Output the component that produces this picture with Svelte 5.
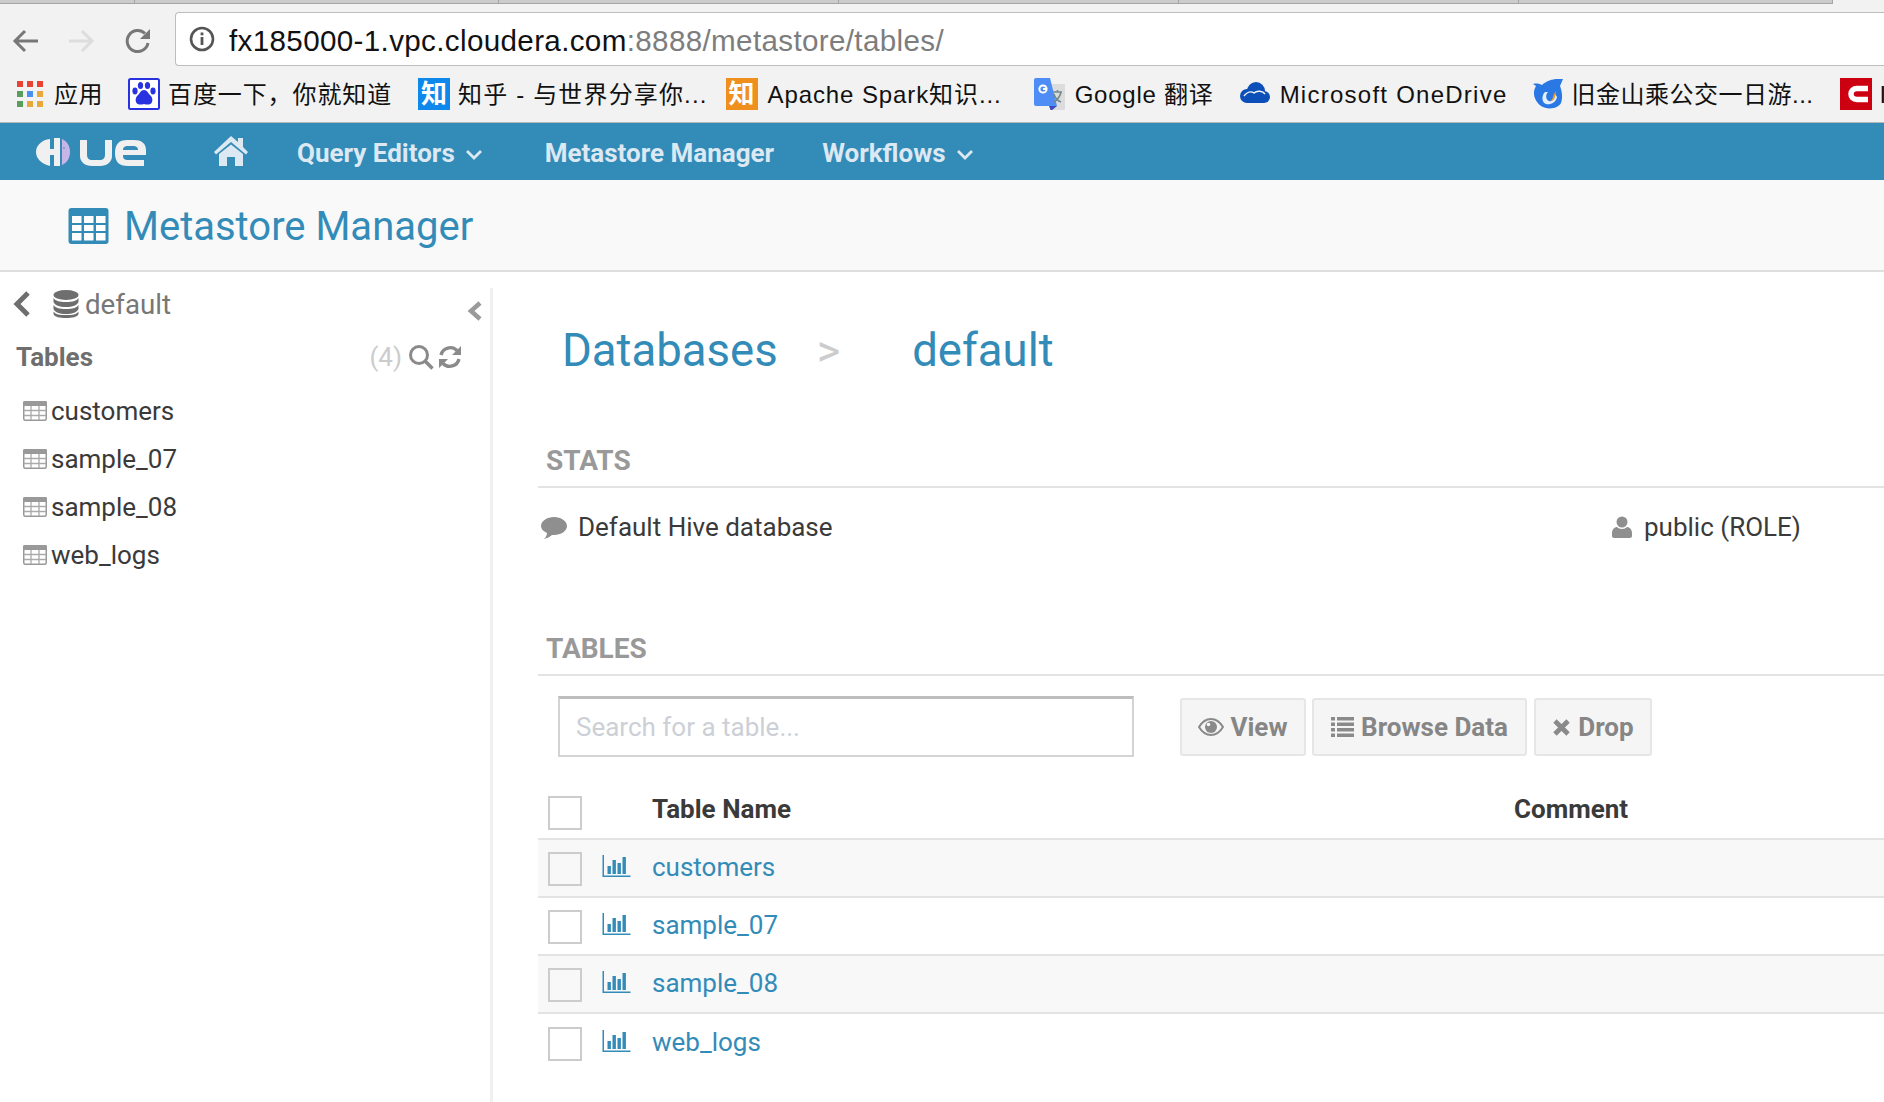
<script>
  const sideTables = ['customers', 'sample_07', 'sample_08', 'web_logs'];
  const tabs = [135, 364, 340, 340, 340, 314];
</script>

<div class="page">
  <div class="tabstrip">
    {#each tabs as w}
      <span class="tab" style="width: {w}px"></span>
    {/each}
  </div>
  <div class="toolbar">
    <svg class="tool back" viewBox="0 0 30 30"><path d="M27 15H5M14 5 4 15l10 10" fill="none" stroke="#777" stroke-width="3"/></svg>
    <svg class="tool fwd" viewBox="0 0 30 30"><path d="M3 15h22M16 5l10 10-10 10" fill="none" stroke="#ddd" stroke-width="3"/></svg>
    <svg class="tool reload" viewBox="0 0 30 30"><path d="M25 17a10.500 10.500 0 1 1-3-9.500" fill="none" stroke="#777" stroke-width="3"/><path d="M27 3v10H17z" fill="#777"/></svg>
    <div class="urlbar">
      <svg class="info" viewBox="0 0 28 28"><circle cx="14" cy="14" r="11" fill="none" stroke="#555" stroke-width="2.600"/><rect x="12.600" y="12" width="2.800" height="8" fill="#555"/><rect x="12.600" y="7.500" width="2.800" height="2.800" fill="#555"/></svg>
      <span class="urltext"><span class="host">fx185000-1.vpc.cloudera.com</span><span class="path">:8888/metastore/tables/</span></span>
    </div>
  </div>

  <div class="bookmarks">
    <div class="bm first">
      <svg class="apps" viewBox="0 0 26 26">
        <rect width="6" height="6" fill="#ea4335"/><rect x="10" width="6" height="6" fill="#ea4335"/><rect x="20" width="6" height="6" fill="#ea4335"/>
        <rect y="10" width="6" height="6" fill="#5a9e5e"/><rect x="10" y="10" width="6" height="6" fill="#4a90f0"/><rect x="20" y="10" width="6" height="6" fill="#e9a83a"/>
        <rect y="20" width="6" height="6" fill="#5a9e5e"/><rect x="10" y="20" width="6" height="6" fill="#e9a83a"/><rect x="20" y="20" width="6" height="6" fill="#e9a83a"/>
      </svg>
      <span>应用</span>
    </div>
    <div class="bm baidu">
      <svg class="fav" viewBox="0 0 32 32"><rect x="1" y="1" width="30" height="30" rx="1.500" fill="#fff" stroke="#2932e1" stroke-width="2"/><g fill="#2932e1"><ellipse cx="7" cy="13" rx="2.600" ry="3.400"/><ellipse cx="12.500" cy="7.500" rx="2.600" ry="3.600"/><ellipse cx="19.500" cy="7.500" rx="2.600" ry="3.600"/><ellipse cx="25" cy="13" rx="2.600" ry="3.400"/><path d="M16 12c-3 0-4 3-6 5s-3 4-2 7 5 3 8 2c3 1 7 1 8-2s0-5-2-7-3-5-6-5z"/></g></svg>
      <span>百度一下，你就知道</span>
    </div>
    <div class="bm zhihu">
      <div class="fav zhi blue">知</div>
      <span>知乎 - 与世界分享你...</span>
    </div>
    <div class="bm spark">
      <div class="fav zhi orange">知</div>
      <span>Apache Spark知识...</span>
    </div>
    <div class="bm gt">
      <svg class="fav" viewBox="0 0 32 32"><path d="M12 6h18a1 1 0 0 1 1 1v24a1 1 0 0 1-1 1H16z" fill="#dcdcdc"/><path d="M2 0h14l7 28H2a2 2 0 0 1-2-2V2a2 2 0 0 1 2-2z" fill="#4d8df5"/><path d="m15 28 2 5 6-5z" fill="#3b4cc0"/><circle cx="9" cy="11" r="3.600" fill="none" stroke="#fff" stroke-width="2"/><path d="M9 11h4" stroke="#fff" stroke-width="2"/><path d="M19 14h9M23.500 12v2M27 14c-1 5-4 8-7 10M20 16c1 4 4 7 7 8" fill="none" stroke="#6f8a90" stroke-width="1.600"/></svg>
      <span>Google 翻译</span>
    </div>
    <div class="bm od">
      <svg class="fav" viewBox="0 0 32 32"><g fill="#0c4fb8"><circle cx="8" cy="18" r="7"/><circle cx="17" cy="13" r="9"/><circle cx="25" cy="19" r="6"/><rect x="8" y="18" width="17" height="7"/></g><path d="M5 18c3-4 7-5 10-3 3-3 9-2 11 1" fill="none" stroke="#f2f2f2" stroke-width="1.400"/></svg>
      <span>Microsoft OneDrive</span>
    </div>
    <div class="bm sf">
      <svg class="fav" viewBox="0 0 32 32"><path d="M31 1l-3 7c2 5 3 12 1 17-3 6-14 7-20 3C2 23 0 14 4 8l-3-2c4-1 7 0 9 1 4-4 11-6 15-6z" fill="#2a78e4"/><path d="M13 14c-4 4-3 11 1 12s10-1 11-7l-2-3c0 5-3 8-6 7s-4-6-1-9z" fill="#e4effb"/><path d="M24 13l-1 6c-1 3-3 4-5 4 3-1 3-5 4-7z" fill="#f59a23"/></svg>
      <span>旧金山乘公交一日游...</span>
    </div>
    <div class="bm cbm">
      <svg class="fav" viewBox="0 0 32 32"><rect width="32" height="32" fill="#cc0011"/><path d="M28 10.500H17c-4 0-6 2.500-6 5.500s2 5.500 6 5.500h11" fill="none" stroke="#fff" stroke-width="5.500"/></svg>
      <span>I</span>
    </div>
  </div>

  <nav class="nav">
    <svg class="logo" viewBox="0 0 110 28">
      <path d="M14 1C5 2 0 8 0 14s5 12 14 14V17h4v11h6V0h-6v11h-4z" fill="#f0f0f0"/>
      <path d="M26 1c5 2 8 7 8 13s-3 11-8 13z" fill="#c8b5e8"/>
      <circle cx="28" cy="10" r="1" fill="#6f9fc8"/>
      <path d="M44 2h7v15c0 3 2 5 5 5h8c3 0 5-2 5-5V2h7v16c0 6-5 10-12 10h-8c-7 0-12-4-12-10z" fill="#f0f0f0"/>
      <path d="M79 15c0-9 4-13 12-13h7c7 0 12 3 12 10v5H87v1c0 3 2 4 5 4h16v6H92c-9 0-13-4-13-13zm8-3h15c0-3-2-4-5-4h-5c-3 0-5 1-5 4z" fill="#f0f0f0"/>
    </svg>
    <svg class="home" viewBox="0 0 34 30"><path d="M17 0l7 6V2h5v9l5 5-2 2.500L17 6 2 18.500 0 16z" fill="#dce8f2"/><path d="M17 8.500 29 18v12h-8v-9h-8v9H5V18z" fill="#dce8f2"/></svg>
    <a class="navitem ed">Query Editors <svg class="caret" viewBox="0 0 18 11"><path d="M2 2l7 7 7-7" fill="none" stroke="#dce8f2" stroke-width="2.800"/></svg></a>
    <a class="navitem ms">Metastore Manager</a>
    <a class="navitem wf">Workflows <svg class="caret" viewBox="0 0 18 11"><path d="M2 2l7 7 7-7" fill="none" stroke="#dce8f2" stroke-width="2.800"/></svg></a>
  </nav>

  <header class="title">
    <svg class="th" viewBox="0 0 40 36"><rect width="40" height="36" rx="3" fill="#338bb8"/><g fill="#fff"><rect x="3.500" y="8" width="9.500" height="7"/><rect x="15.500" y="8" width="9.500" height="7"/><rect x="27.500" y="8" width="9.500" height="7"/><rect x="3.500" y="17" width="9.500" height="6"/><rect x="15.500" y="17" width="9.500" height="6"/><rect x="27.500" y="17" width="9.500" height="6"/><rect x="3.500" y="25" width="9.500" height="7.500"/><rect x="15.500" y="25" width="9.500" height="7.500"/><rect x="27.500" y="25" width="9.500" height="7.500"/></g></svg>
    <h1>Metastore Manager</h1>
  </header>

  <div class="main">
    <aside class="side">
      <div class="dbrow">
        <svg class="chev" viewBox="0 0 18 28"><path d="M15 3 4 14l11 11" fill="none" stroke="#6e6e6e" stroke-width="5"/></svg>
        <svg class="db" viewBox="0 0 26 28"><g fill="#6e6e6e"><ellipse cx="13" cy="5" rx="12.500" ry="5"/><path d="M.5 8c2 3 6 4 12.500 4s10.500-1 12.500-4v4c-1 3-6 5-12.500 5S1.500 15 .5 12z"/><path d="M.5 15c2 3 6 4 12.500 4s10.500-1 12.500-4v4c-1 3-6 5-12.500 5S1.500 22 .5 19z"/><path d="M.5 21.500c2 3 6 3.500 12.500 3.500s10.500-.5 12.500-3.500V24c-1 3-6 4-12.500 4S1.500 27 .5 24z"/></g></svg>
        <span class="dbname">default</span>
        <svg class="collapse" viewBox="0 0 16 22"><path d="M13 3 4 11l9 8" fill="none" stroke="#9a9a9a" stroke-width="4.500"/></svg>
      </div>
      <div class="tbhead">
        <strong>Tables</strong>
        <span class="count">(4)</span>
        <svg class="mini search-ico" viewBox="0 0 26 26"><circle cx="11" cy="11" r="8.500" fill="none" stroke="#8a8a8a" stroke-width="3"/><path d="m17 17 7.500 7.500" stroke="#8a8a8a" stroke-width="3.600"/></svg>
        <svg class="mini" viewBox="0 0 24 24"><path d="M3 10a9.500 9.500 0 0 1 16-4.500M21 14a9.500 9.500 0 0 1-16 4.500" fill="none" stroke="#8a8a8a" stroke-width="3.400"/><path d="M23 1v9h-9zM1 23v-9h9z" fill="#8a8a8a"/></svg>
      </div>
      <ul class="tlist">
        {#each sideTables as t}
          <li>
            <svg class="tbl" viewBox="0 0 24 20"><rect x=".75" y=".75" width="22.500" height="18.500" rx="1.500" fill="#fff" stroke="#999" stroke-width="1.500"/><rect x="0" y="0" width="24" height="5" rx="1.500" fill="#999"/><path d="M8 5v14M16 5v14M1 9.500h22M1 14.500h22" stroke="#aaa" stroke-width="1.300"/></svg>
            <span>{t}</span>
          </li>
        {/each}
      </ul>
    </aside>

    <section class="content">
      <div class="crumbs">
        <a>Databases</a><span class="sep">&gt;</span><a class="cur">default</a>
      </div>

      <h2 class="sec stats">STATS</h2>
      <div class="statrow">
        <div class="desc">
          <svg class="cmt" viewBox="0 0 26 22"><path d="M13 0c7 0 13 4 13 9s-6 9-13 9h-2c-2 2-5 3-8 4 1-1 3-3 3-6-4-2-6-4-6-7 0-5 6-9 13-9z" fill="#8f8f8f"/></svg>
          <span>Default Hive database</span>
        </div>
        <div class="owner">
          <svg class="usr" viewBox="0 0 20 22"><circle cx="10" cy="6" r="5.500" fill="#8f8f8f"/><path d="M0 17c0-4 3-6 5-6 1 1 3 2 5 2s4-1 5-2c2 0 5 2 5 6v3c0 1-1 2-2 2H2c-1 0-2-1-2-2z" fill="#8f8f8f"/></svg>
          <span>public (ROLE)</span>
        </div>
      </div>

      <h2 class="sec tables">TABLES</h2>
      <div class="actions">
        <input class="search" placeholder="Search for a table..." />
        <div class="btn b1"><svg class="ico eye" viewBox="0 0 26 18"><path d="M1 9c3-5 7-8 12-8s9 3 12 8c-3 5-7 8-12 8S4 14 1 9z" fill="none" stroke="#8a8a8a" stroke-width="2"/><circle cx="13" cy="9" r="6" fill="#8a8a8a"/><circle cx="10.500" cy="6.500" r="1.800" fill="#f5f5f5"/></svg>View</div>
        <div class="btn b2"><svg class="ico lst" viewBox="0 0 23 20"><g fill="#8a8a8a"><rect width="4" height="3.500"/><rect x="6" width="17" height="3.500"/><rect y="5.500" width="4" height="3.500"/><rect x="6" y="5.500" width="17" height="3.500"/><rect y="11" width="4" height="3.500"/><rect x="6" y="11" width="17" height="3.500"/><rect y="16.500" width="4" height="3.500"/><rect x="6" y="16.500" width="17" height="3.500"/></g></svg>Browse Data</div>
        <div class="btn b3"><svg class="ico x" viewBox="0 0 16 16"><path d="M2.500 2.500l11 11M13.500 2.500l-11 11" stroke="#8a8a8a" stroke-width="4"/></svg>Drop</div>
      </div>

      <div class="thead">
        <span class="cb"></span>
        <span class="tname">Table Name</span>
        <span class="comment">Comment</span>
      </div>
      {#each sideTables as t, i}
        <div class="row" class:odd={i % 2 === 0}>
          <span class="cb"></span>
          <svg class="bar" viewBox="0 0 28 22"><path d="M.75 0v21.250H28" fill="none" stroke="#338bb8" stroke-width="1.500"/><g fill="#338bb8"><rect x="5" y="11" width="3.400" height="8"/><rect x="10" y="5" width="3.400" height="14"/><rect x="15" y="8" width="3.400" height="11"/><rect x="20" y="2" width="3.400" height="17"/></g></svg>
          <a class="link">{t}</a>
        </div>
      {/each}
    </section>
  </div>
</div>

<style>
  :global(body) {
    margin: 0;
    background: #fff;
    overflow: hidden;
  }
  .page {
    width: 1884px;
    height: 1102px;
    overflow: hidden;
    font-family: Roboto, sans-serif;
    color: #333;
  }
  .tabstrip {
    height: 4px;
    background: #f2f2f2;
    display: flex;
    align-items: flex-start;
  }
  .tab {
    height: 4px;
    box-sizing: border-box;
    background: #cbcbcb;
    border-bottom: 1px solid #a5a5a5;
    border-right: 1px solid #a5a5a5;
    flex: none;
  }
  .toolbar {
    height: 62px;
    background: #f2f2f2;
    display: flex;
    align-items: flex-end;
    box-sizing: border-box;
  }
  .tool { width: 30px; height: 30px; flex: none; margin-bottom: 10px; }
  .back { margin-left: 11px; }
  .fwd { margin-left: 25px; }
  .reload { margin-left: 27px; }
  .urlbar {
    margin-left: 22px;
    height: 54px;
    flex: 1;
    background: #fff;
    border: 1px solid #bdbdbd;
    border-right: 0;
    border-radius: 4px 0 0 4px;
    box-sizing: border-box;
    display: flex;
    align-items: center;
    font-family: "Liberation Sans", sans-serif;
    font-size: 29.600px;
    white-space: nowrap;
  }
  .info { width: 28px; height: 28px; margin-left: 12px; margin-right: 13px; flex: none; }
  .urltext { padding-top: 3px; }
  .host { color: #111; letter-spacing: .35px; }
  .path { color: #7d7d7d; letter-spacing: .35px; }

  .bookmarks {
    height: 57px;
    background: #f2f2f2;
    border-bottom: 1px solid #b8b8b8;
    box-sizing: border-box;
    display: flex;
    align-items: center;
    padding-left: 17px;
    white-space: nowrap;
    font-family: "Liberation Sans", "Noto Sans CJK SC", sans-serif;
    font-size: 24px;
    letter-spacing: .5px;
    color: #111;
    overflow: hidden;
  }
  .bm { display: flex; align-items: center; gap: 8px; margin-left: 26px; flex: none; line-height: 32px; }
  .bm span { padding-top: 2px; }
  .bm.first { margin-left: 0; gap: 11px; }
  .bm.baidu { margin-left: 25px; letter-spacing: .9px; }
  .bm.baidu span { margin-left: 0; }
  .bm.zhihu { margin-left: 26px; letter-spacing: 1.150px; }
  .bm.spark { margin-left: 18px; letter-spacing: .9px; gap: 10px; }
  .bm.gt { margin-left: 32px; letter-spacing: .77px; gap: 9px; }
  .bm.od { margin-left: 25px; letter-spacing: 1.250px; gap: 9px; }
  .bm.sf { margin-left: 24px; }
  .apps { width: 26px; height: 26px; }
  .fav { width: 32px; height: 32px; flex: none; }
  .zhi {
    display: flex; align-items: center; justify-content: center;
    color: #fff; font-size: 26px; font-weight: 700; line-height: 32px; letter-spacing: 0;
  }
  .blue { background: #0f88eb; }
  .orange { background: #ee8f1e; }

  .nav {
    height: 57px;
    background: #338bb8;
    display: flex;
    align-items: center;
    color: #dce8f2;
    font-weight: 700;
    font-size: 26px;
    white-space: nowrap;
  }
  .logo { width: 110px; height: 28px; margin-left: 36px; flex: none; }
  .home { width: 34px; height: 30px; margin-left: 68px; flex: none; margin-top: -2px; }
  .navitem { display: flex; align-items: center; gap: 10px; padding-top: 3px; }
  .ed { margin-left: 49px; }
  .ms { margin-left: 62px; }
  .wf { margin-left: 48px; }
  .caret { width: 18px; height: 11px; margin-top: 3px; }

  .title {
    height: 92px;
    background: #f9f9f9;
    border-bottom: 2px solid #dfdfdf;
    box-sizing: border-box;
    display: flex;
    align-items: center;
    padding-left: 68px;
  }
  .th { width: 41px; height: 36px; margin-top: 2px; }
  h1 {
    margin: 3px 0 0 15px;
    font-weight: 400;
    font-size: 40px;
    color: #338bb8;
    line-height: 1;
  }

  .main { display: flex; height: 830px; }
  .side {
    width: 493px;
    flex: none;
    box-sizing: border-box;
    margin-top: 16px;
    border-right: 3px solid #f0f0f0;
  }
  .dbrow {
    display: flex;
    align-items: center;
    height: 28px;
    padding-left: 13px;
    color: #777;
    font-size: 27.700px;
    position: relative;
    margin-top: 2px;
  }
  .chev { width: 18px; height: 28px; }
  .db { width: 26px; height: 28px; margin-left: 22px; }
  .dbname { margin-left: 6px; }
  .collapse { position: absolute; right: 7px; top: 10px; width: 16px; height: 22px; }
  .tbhead {
    display: flex;
    align-items: center;
    margin-top: 26px;
    height: 26px;
    padding-left: 16px;
    padding-right: 28px;
  }
  .tbhead strong { font-size: 26px; color: #6e6e6e; flex: 1; font-weight: 700; }
  .count { color: #ccc; font-size: 26px; margin-right: 6px; }
  .mini { width: 24px; height: 24px; margin-left: 2px; }
  .search-ico { width: 26px; height: 26px; margin-left: 0; margin-right: 2px; }
  .tlist { list-style: none; margin: 17px 0 0; padding: 0; }
  .tlist li {
    height: 48px;
    display: flex;
    align-items: center;
    padding-left: 23px;
    font-size: 26px;
    color: #3a3a3a;
  }
  .tbl { width: 24px; height: 20px; margin-right: 4px; flex: none; }

  .content { flex: 1; min-width: 0; box-sizing: border-box; padding-left: 45px; }
  .crumbs {
    padding-left: 24px;
    margin-top: 53px;
    height: 50px;
    display: flex;
    align-items: center;
    font-size: 45.500px;
    color: #338bb8;
  }
  .sep { color: #ccc; font-size: 45px; margin-left: 39px; margin-right: 72px; }
  .sec {
    margin: 0;
    font-size: 28px;
    font-weight: 700;
    color: #999;
    padding-left: 8px;
    border-bottom: 2px solid #e3e3e3;
    line-height: 30px;
    box-sizing: border-box;
  }
  .stats { margin-top: 71px; height: 42px; }
  .statrow {
    display: flex;
    align-items: center;
    height: 50px;
    margin-top: 14px;
    font-size: 26px;
    color: #3a3a3a;
    position: relative;
  }
  .desc { display: flex; align-items: center; padding-left: 3px; width: 1071px; flex: none; }
  .cmt { width: 26px; height: 22px; margin-right: 11px; margin-top: 2px; }
  .owner { display: flex; align-items: center; }
  .usr { width: 20px; height: 22px; margin-right: 12px; }
  .tables { margin-top: 82px; height: 42px; }
  .actions { display: flex; align-items: center; margin-top: 20px; height: 62px; padding-left: 20px; }
  .search {
    width: 576px;
    height: 61px;
    box-sizing: border-box;
    border: 2px solid #d4d4d4;
    border-top: 3px solid #bdbdbd;
    background: #fff;
    font-family: Roboto, sans-serif;
    font-size: 26px;
    padding: 0 16px;
    outline: none;
    flex: none;
    align-self: flex-start;
  }
  .search::placeholder { color: #ccd0d6; opacity: 1; }
  .btn {
    height: 58px;
    box-sizing: border-box;
    background: #f5f5f5;
    border: 2px solid #e6e6e6;
    border-radius: 3px;
    display: flex;
    align-items: center;
    justify-content: center;
    gap: 6px;
    font-weight: 700;
    font-size: 26px;
    color: #868686;
    white-space: nowrap;
    flex: none;
    align-self: flex-start;
    margin-top: 2px;
  }
  .b1 { width: 126px; margin-left: 46px; }
  .b2 { width: 215px; margin-left: 6px; gap: 7px; }
  .b3 { width: 118px; margin-left: 7px; gap: 7px; }
  .ico.eye { width: 26px; height: 18px; }
  .ico.lst { width: 23px; height: 20px; }
  .ico.x { width: 19px; height: 19px; }

  .thead {
    display: flex;
    align-items: center;
    height: 82px;
    border-bottom: 2px solid #e3e3e3;
    box-sizing: border-box;
    font-weight: 700;
    font-size: 26px;
    color: #3a3a3a;
    padding-left: 10px;
    padding-top: 24px;
  }
  .cb {
    width: 34px;
    height: 34px;
    box-sizing: border-box;
    border: 2px solid #ccc;
    display: block;
    flex: none;
  }
  .thead .cb { margin-top: 6px; }
  .tname { margin-left: 70px; width: 862px; flex: none; margin-bottom: 2px; }
  .comment { margin-bottom: 2px; }
  .row {
    display: flex;
    align-items: center;
    height: 58px;
    border-bottom: 2px solid #e3e3e3;
    box-sizing: border-box;
    padding-left: 10px;
  }
  .row:last-child { border-bottom: 0; }
  .row.odd { background: #f8f8f8; }
  .row .cb { margin-top: 2px; }
  .bar { width: 29px; height: 22px; margin-left: 20px; flex: none; margin-top: -5px; }
  .link { margin-left: 21px; color: #338bb8; font-size: 26px; margin-top: -2px; }
</style>
